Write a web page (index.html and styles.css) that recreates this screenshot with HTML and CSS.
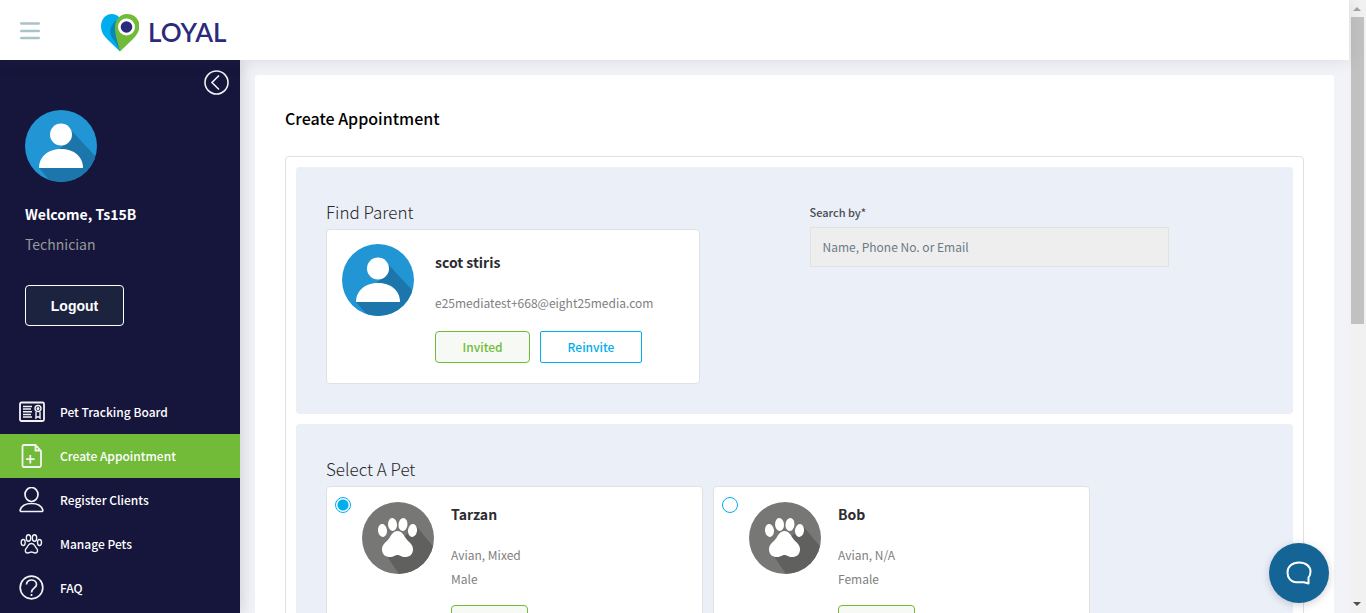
FILE: index.html
```html
<!DOCTYPE html>
<html lang="en">
<head>
<meta charset="utf-8">
<title>Create Appointment</title>
<link rel="stylesheet" href="styles.css">
</head>
<body>
<svg class="defs" aria-hidden="true">
  <defs>
    <clipPath id="disc"><circle cx="36" cy="36" r="36"/></clipPath>
    <symbol id="person" viewBox="0 0 72 72">
      <g clip-path="url(#disc)">
        <rect width="72" height="72" fill="#2295d4"/>
        <path d="M44 18L72 48V72H26L14 58L40 34L31 34Z" fill="#1d76ab"/>
        <circle cx="36" cy="24.500" r="11"/>
        <path d="M14 58C14 46 24 39 36 39S58 46 58 58Z"/>
      </g>
    </symbol>
    <symbol id="paw" viewBox="0 0 72 72">
      <g clip-path="url(#disc)">
        <rect width="72" height="72" fill="#777775"/>
        <path d="M54 24L74 48V72H37L24 53L36 40Z" fill="#60605f"/>
        <ellipse cx="20.500" cy="28.500" rx="4.500" ry="6.500" transform="rotate(-8 20.500 28.500)"/>
        <ellipse cx="30.500" cy="22.500" rx="4.500" ry="6.500" transform="rotate(-4 30.500 22.500)"/>
        <ellipse cx="41" cy="22.500" rx="4.500" ry="6.500" transform="rotate(6 41 22.500)"/>
        <ellipse cx="50.500" cy="28.500" rx="4.500" ry="6.500" transform="rotate(8 50.500 28.500)"/>
        <path d="M35.500 29C31 29 29.500 33 27 36.500C24 40.500 20 42 20 47.500C20 52.500 23.500 55 28 55C32 55 33 53 35.500 53S39 55 43 55C47.500 55 51 52.500 51 47.500C51 42 47 40.500 44 36.500C41.500 33 40 29 35.500 29Z"/>
      </g>
    </symbol>
  </defs>
</svg>
<div class="page">
  <header class="topbar">
    <button class="menu" type="button" aria-label="Menu">
      <svg width="20" height="18" viewBox="0 0 20 18" stroke="#abc2c8" stroke-width="2.400" stroke-linecap="round"><path d="M1.200 1.500H18.800M1.200 9H18.800M1.200 16H18.800"/></svg>
    </button>
    <a class="brand" href="#">
      <svg width="38" height="38" viewBox="0 0 38 38">
        <path d="M19 4C16 1 14 0 11 0C4 0 0 6 0 12C0 19 4 23 7 26L19 37.500L24 14Z" fill="#00aeef"/>
        <path d="M17 5C9 10 7 19 12 25C15 29 17 33 19 37L22 14Z" fill="#0a86b8"/>
        <path d="M26 0C19 0 14 6 14 13C14 22 17 29 19 37.500L31 26C35 22 38.500 18 38.500 12C38.500 5 33 0 26 0Z" fill="#72bb39"/>
        <circle cx="25.500" cy="13" r="8.500" fill="#fff"/>
        <circle cx="25.500" cy="13" r="5.800" fill="#2c2a7c"/>
      </svg>
      <span>LOYAL</span>
    </a>
  </header>
  <div class="body">
    <aside class="sidebar">
      <button class="collapse" type="button" aria-label="Collapse">
        <svg width="25" height="25" viewBox="0 0 25 25" fill="none" stroke="#f2f2f5" stroke-width="1.600"><circle cx="12.500" cy="12.500" r="11.500"/><path d="M15 5.500L8 12.500L15 19.500"/></svg>
      </button>
      <div class="profile">
        <svg class="avatar"><use href="#person"/></svg>
        <p class="welcome">Welcome, Ts15B</p>
        <p class="role">Technician</p>
        <button class="logout" type="button">Logout</button>
      </div>
      <nav class="nav">
        <a href="#"><svg viewBox="0 0 26 26"><rect x="1" y="3.500" width="24" height="18.500" rx="1.500" stroke-width="1.800"/><path d="M4 7.500H13M4 10H12M4 12.800H13M4 15.500H12M4 18H13M17 13V19L19 17.500L21 19V13"/><circle cx="19" cy="9.500" r="3"/><circle cx="19" cy="9.500" r=".8"/></svg>Pet Tracking Board</a>
        <a href="#" class="active"><svg viewBox="0 0 26 26"><path stroke-width="1.800" d="M5 2H16.500L22 8V22.500Q22 24 20.500 24H5Q3.500 24 3.500 22.500V3.500Q3.500 2 5 2ZM16.500 2V7.500H22M11.300 12V20.500M7 16.200H15.600"/></svg>Create Appointment</a>
        <a href="#"><svg viewBox="0 0 26 26"><ellipse cx="12.500" cy="7.500" rx="6.500" ry="7" stroke-width="1.700"/><path stroke-width="1.700" d="M2.500 24.500Q1 24.500 1.200 23C2.500 18.500 7.500 16.500 12.500 16.500S22.500 18.500 23.800 23Q24 24.500 22.500 24.500Z"/></svg>Register Clients</a>
        <a href="#"><svg viewBox="0 0 26 26"><ellipse cx="4.200" cy="11.500" rx="2" ry="3"/><ellipse cx="9.500" cy="7" rx="2.200" ry="3.300"/><ellipse cx="15.500" cy="7" rx="2.200" ry="3.300"/><ellipse cx="20.500" cy="11.500" rx="2" ry="3"/><path d="M12.400 12.500C9 12.500 9 15.500 7.500 17C5.500 19 6 22 8.700 22C10.500 22 11 21 12.400 21S14.300 22 16 22C19 22 19.300 19 17.300 17C15.800 15.500 15.800 12.500 12.400 12.500Z"/></svg>Manage Pets</a>
        <a href="#"><svg viewBox="0 0 26 26"><circle cx="12.500" cy="12.500" r="11.300" stroke-width="1.700"/><path stroke-width="1.700" d="M7.500 9.500C7.500 3.500 17.500 3.500 17.500 9.500C17.500 13 12.500 13 12.500 17.500M12.500 19V21"/></svg>FAQ</a>
      </nav>
    </aside>
    <main class="main">
      <div class="panel">
        <h1>Create Appointment</h1>
        <div class="sections">
          <section class="section columns">
            <div>
              <h2>Find Parent</h2>
              <article class="card parent">
                <svg class="avatar"><use href="#person"/></svg>
                <div class="info">
                  <h3>scot stiris</h3>
                  <p class="email">e25mediatest+668@eight25media.com</p>
                  <div class="actions">
                    <button class="btn invited" type="button">Invited</button>
                    <button class="btn reinvite" type="button">Reinvite</button>
                  </div>
                </div>
              </article>
            </div>
            <div class="search">
              <label for="search">Search by*</label>
              <input id="search" type="text" placeholder="Name, Phone No. or Email">
            </div>
          </section>
          <section class="section">
            <h2>Select A Pet</h2>
            <div class="pets">
              <article class="card pet">
                <input type="radio" name="pet" aria-labelledby="tarzan" checked>
                <svg class="avatar"><use href="#paw"/></svg>
                <div class="info">
                  <h3 id="tarzan">Tarzan</h3>
                  <p>Avian, Mixed</p>
                  <p>Male</p>
                  <span class="status"></span>
                </div>
              </article>
              <article class="card pet">
                <input type="radio" name="pet" aria-labelledby="bob">
                <svg class="avatar"><use href="#paw"/></svg>
                <div class="info">
                  <h3 id="bob">Bob</h3>
                  <p>Avian, N/A</p>
                  <p>Female</p>
                  <span class="status"></span>
                </div>
              </article>
            </div>
          </section>
        </div>
      </div>
    </main>
  </div>
</div>
<div class="scrollbar" aria-hidden="true">
  <svg width="17" height="17" viewBox="0 0 17 17"><path d="M4 11H12L8 7Z" fill="#a3a3a3"/></svg>
  <div class="track"><div class="thumb"></div></div>
  <svg width="17" height="17" viewBox="0 0 17 17"><path d="M4 6H12L8 10Z" fill="#505050"/></svg>
</div>
<button class="chat" type="button" aria-label="Chat">
  <svg width="26" height="24" viewBox="0 0 26 24" fill="none" stroke="#fff" stroke-width="2" stroke-linejoin="round"><path d="M22.500 16.500V22.500L18 21.200H10C5 21.200 1.500 17 1.500 11.500C1.500 5.500 6 1.500 13 1.500S24.500 5.500 24.500 10.500C24.500 13 24 15 22.500 16.500Z"/></svg>
</button>
</body>
</html>
```
FILE: styles.css
```css
* { box-sizing: border-box; }
body {
  margin: 0;
  height: 100vh;
  display: flex;
  overflow: hidden;
  font: 13px/24px "Noto Sans CJK SC", "Noto Sans", sans-serif;
  color: #282828;
  background: #f2f3f8;
}
h1, h2, h3, p { margin: 0; }
button { padding: 0; border: 0; background: none; font: inherit; cursor: pointer; }
a { text-decoration: none; }
svg { display: block; flex: none; }
.defs { position: absolute; width: 0; height: 0; }

.page { flex: 1; min-width: 0; display: flex; flex-direction: column; }
.topbar {
  height: 60px;
  flex: none;
  display: flex;
  align-items: center;
  gap: 61px;
  padding: 2px 20px 0;
  background: #fff;
  box-shadow: 0 1px 15px rgba(69, 65, 78, .12);
  z-index: 2;
}
.brand {
  display: flex;
  align-items: center;
  gap: 9px;
  padding-top: 4px;
  color: #2c2a7c;
  font: 600 26px/30px Lato, sans-serif;
}
.brand span { padding-bottom: 2px; }
.body { flex: 1; min-height: 0; display: flex; overflow: hidden; }

.sidebar {
  width: 240px;
  flex: none;
  padding-top: 10px;
  background: #16153b;
  box-shadow: 0 0 15px rgba(69, 65, 78, .25);
}
.collapse { display: block; margin: 0 11px 15px auto; }
.profile { padding: 0 25px; color: #fff; }
.avatar { width: 72px; height: 72px; fill: #fff; }
.welcome { margin-top: 22px; font-size: 14px; font-weight: 700; line-height: 20px; }
.role { margin-top: 10px; font-size: 14px; line-height: 20px; color: #999; }
.logout {
  width: 99px;
  height: 41px;
  margin: 31px 0 64px;
  border: 1px solid #fff;
  border-radius: 4px;
  background: #1b233f;
  color: #fff;
  font: 700 14px/20px "Liberation Sans", sans-serif;
}
.nav a {
  height: 44px;
  display: flex;
  align-items: center;
  gap: 15px;
  padding-left: 19px;
  color: #fff;
  font-size: 12px;
  font-weight: 500;
}
.nav .active { background: #72bb39; }
.nav svg { width: 26px; height: 26px; fill: none; stroke: #f2f2f5; stroke-width: 1.4; }

.main { flex: 1; min-width: 0; padding: 15px 15px 0; }
.panel { position: relative; padding: 30px; border-radius: 4px; background: #fff; }
h1 { margin-bottom: 25px; font-size: 16px; font-weight: 500; line-height: 26px; color: #000; }
.sections {
  display: flex;
  flex-direction: column;
  gap: 10px;
  padding: 10px;
  border: 1px solid #e0e0e3;
  border-radius: 4px;
}
.section { padding: 30px; border-radius: 4px; background: #ebeff8; }
.columns { display: grid; grid-template-columns: 1fr 1fr; gap: 30px; }
h2 { margin-bottom: 2px; font-size: 17px; font-weight: 300; line-height: 30px; }
.card {
  display: flex;
  padding: 14px 15px 20px;
  border: 1px solid #e1e1e1;
  border-radius: 4px;
  background: #fff;
  color: #808080;
}
.parent { max-width: 374px; gap: 21px; }
.info { padding-top: 7px; }
.info p { font-size: 12px; }
h3 { margin-bottom: 18px; font-size: 14px; font-weight: 700; line-height: 22px; color: #2c2c30; }
.actions { display: flex; gap: 10px; margin-top: 16px; }
.btn { height: 32px; border: 1px solid; border-radius: 4px; font-size: 12px; font-weight: 500; line-height: 24px; }
.invited { width: 95px; background: #f7faf4; color: #72bb39; }
.reinvite { width: 102px; border-radius: 2px; background: #fff; color: #00aeef; }
.search { display: flex; flex-direction: column; max-width: 359px; }
.search label { font-size: 11px; font-weight: 500; line-height: 30px; color: #4a4a50; }
.search input {
  width: 100%;
  height: 40px;
  padding: 0 12px 2px;
  border: 1px solid #e1e3df;
  background: #eee;
  font: 12px/24px "Noto Sans CJK SC", "Noto Sans", sans-serif;
}
.search input::placeholder { color: #6c7a86; opacity: 1; }
.pets { display: flex; flex-wrap: wrap; gap: 10px; }
.pet { width: 377px; padding: 15px 15px 20px 8px; }
.pet input {
  appearance: none;
  width: 16px;
  height: 16px;
  margin: -5px 11px 0 0;
  border: 1px solid #00aeef;
  border-radius: 50%;
  background: #fff;
}
.pet input:checked { background: radial-gradient(circle, #00aeef 5px, #fff 6px); }
.pet .info { padding: 1px 0 0 17px; }
.status {
  display: block;
  width: 77px;
  height: 32px;
  margin-top: 14px;
  border: 1px solid #72bb39;
  border-radius: 4px;
  background: #f7faf4;
}

.scrollbar { width: 17px; flex: none; display: flex; flex-direction: column; background: #f1f1f1; }
.track { flex: 1; padding: 0 2px; }
.thumb { height: 53%; background: #c1c1c1; }
.chat {
  position: fixed;
  right: 37px;
  bottom: 10px;
  z-index: 5;
  width: 60px;
  height: 60px;
  display: flex;
  align-items: center;
  justify-content: center;
  border-radius: 50%;
  background: #146496;
  box-shadow: 0 2px 8px rgba(0, 0, 0, .18);
}
```
